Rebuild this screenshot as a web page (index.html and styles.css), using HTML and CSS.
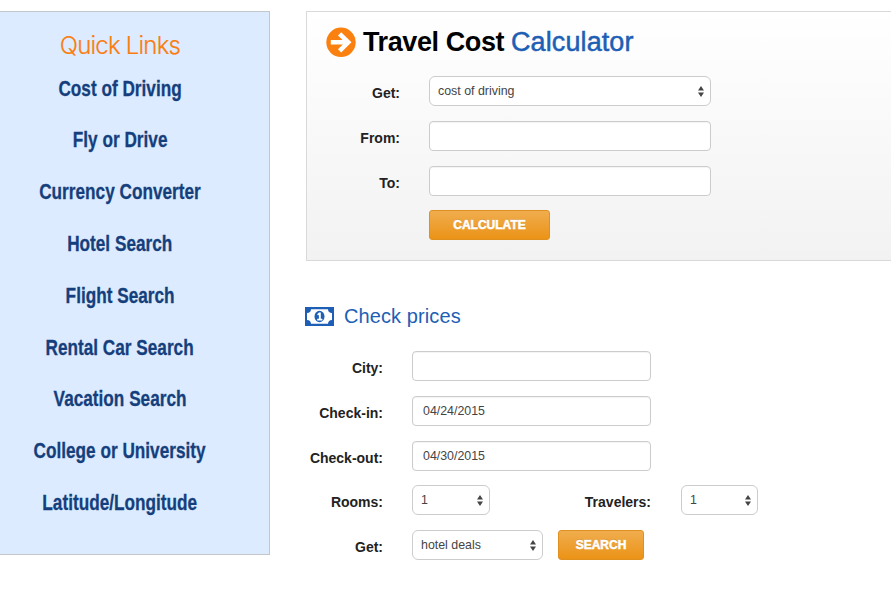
FILE: index.html
```html
<!DOCTYPE html>
<html lang="en">
<head>
<meta charset="utf-8">
<title>Travel Cost Calculator</title>
<link rel="stylesheet" href="styles.css">
</head>
<body>
<svg width="0" height="0" class="defs"><symbol id="updown" viewBox="0 0 6 11"><path d="M0 4.5 3 0 6 4.5zM0 6.5H6L3 11z" fill="#444"/></symbol></svg>
<div class="page">
  <aside class="sidebar">
    <h2>Quick Links</h2>
    <nav>
      <a><span>Cost of Driving</span></a>
      <a><span>Fly or Drive</span></a>
      <a><span>Currency Converter</span></a>
      <a><span>Hotel Search</span></a>
      <a><span>Flight Search</span></a>
      <a><span>Rental Car Search</span></a>
      <a><span>Vacation Search</span></a>
      <a><span>College or University</span></a>
      <a><span>Latitude/Longitude</span></a>
    </nav>
  </aside>
  <main>
    <section class="panel">
      <h1>
        <svg class="arrow" viewBox="0 0 30 30"><circle cx="15" cy="15.3" r="14.7" fill="#fa8110"/><path d="M4.8 15.3H22M13.6 6.8 22.2 15.3 13.6 23.8" fill="none" stroke="#fff" stroke-width="4.6"/></svg>
        <span class="black">Travel Cost</span><span class="blue">Calculator</span>
      </h1>
      <div class="form calc">
        <label>Get:</label><div class="field select">cost of driving<svg><use href="#updown"/></svg></div>
        <label>From:</label><div class="field"></div>
        <label>To:</label><div class="field"></div>
        <span></span><button class="calculate">CALCULATE</button>
      </div>
    </section>
    <section class="prices">
      <h3>
        <svg class="bill" viewBox="0 0 29 19"><path d="M0 0H29V19H0z" fill="#1d5fb5"/><path d="M6 2.2H23A4 4 0 0 0 27 6V13A4 4 0 0 0 23 16.8H6A4 4 0 0 0 2 13V6A4 4 0 0 0 6 2.2z" fill="#fff"/><ellipse cx="14.5" cy="9.5" rx="5" ry="5.8" fill="#1d5fb5"/><path d="M12.2 7.2 14 5.4H15.8V11.8H17.4V13.4H12.2V11.8H13.9V7.8L13 8.4z" fill="#fff"/></svg>
        <span>Check prices</span>
      </h3>
      <div class="form check">
        <label>City:</label><div class="field"></div>
        <label>Check-in:</label><div class="field">04/24/2015</div>
        <label>Check-out:</label><div class="field">04/30/2015</div>
        <label>Rooms:</label>
        <div class="line"><div class="field select rooms">1<svg><use href="#updown"/></svg></div><label class="trav">Travelers:</label><div class="field select travelers">1<svg><use href="#updown"/></svg></div></div>
        <label>Get:</label>
        <div class="line"><div class="field select deals">hotel deals<svg><use href="#updown"/></svg></div><button class="search">SEARCH</button></div>
      </div>
    </section>
  </main>
</div>
</body>
</html>
```
FILE: styles.css
```css
* { box-sizing: border-box; }
body { margin: 0; background: #fff; overflow: hidden; font-family: "Liberation Sans", Arial, sans-serif; }
.defs { position: absolute; }
h1, h2, h3 { margin: 0; }
.page { display: flex; align-items: flex-start; width: 891px; height: 589px; padding-top: 11px; overflow: hidden; }
.sidebar { flex: none; width: 270px; height: 544px; background: #dcebff; border: 1px solid #c3c6ca; border-left: 0; padding: 18px 29px 0 0; text-align: center; }
.sidebar h2 { font: 300 24px/32px Inter, "Liberation Sans", sans-serif; letter-spacing: -0.8px; color: #fa7d0f; -webkit-text-stroke: .2px #fa7d0f; }
.sidebar nav { padding-top: 10.6px; }
.sidebar a { display: block; height: 51.8px; line-height: 32px; font-size: 21.5px; font-weight: 700; color: #153f7c; white-space: nowrap; -webkit-text-stroke: .3px #153f7c; }
.sidebar a span { display: inline-block; transform: scaleX(.8); margin: 0 -30px; }
main { flex: none; width: 585px; margin-left: 36px; }
.panel { height: 250px; border: 1px solid #d9d9d9; border-right: 0; background: linear-gradient(#fff, #f2f2f2); padding: 15px 0 0 20px; }
.panel h1 { display: flex; align-items: center; height: 30px; line-height: 30px; font-size: 27px; white-space: nowrap; }
.arrow { width: 30px; height: 30px; margin: 0 7px 0 -1px; }
.black { width: 148px; color: #000; letter-spacing: -.4px; }
.blue { color: #1d5fb5; font-weight: 400; letter-spacing: .1px; -webkit-text-stroke: .5px #1d5fb5; }
.form { display: grid; grid-auto-rows: 30px; row-gap: 14.8px; }
.calc { grid-template-columns: 73px 282px; column-gap: 29px; margin-top: 19px; }
.check { grid-template-columns: 77px 346px; column-gap: 29px; margin-top: 22px; }
label { text-align: right; font-size: 14px; font-weight: 700; line-height: 34px; color: #222; white-space: nowrap; }
.field { position: relative; height: 30px; border: 1px solid #ccc; border-radius: 4px; background: #fff; box-shadow: inset 0 1px 1px rgba(0,0,0,.05); padding-left: 10px; font-size: 12.4px; line-height: 28px; color: #444; white-space: nowrap; }
.check > .field { width: 239px; }
.select { border-radius: 6px; padding-left: 8px; box-shadow: none; }
.select svg { position: absolute; right: 6px; top: 9px; width: 6px; height: 11px; }
.line { display: flex; }
.rooms { width: 78px; }
.trav { width: 161px; }
.travelers { width: 77px; margin-left: 30px; }
.deals { width: 131px; }
button { height: 30px; padding: 0; border: 1px solid #e0901e; border-radius: 3px; background: linear-gradient(#f0ad4e, #eb9316); color: #fff; font: 700 12px/28px "Liberation Sans", Arial, sans-serif; -webkit-text-stroke: .5px #fff; text-shadow: 0 -1px 0 rgba(0,0,0,.15); }
.calculate { width: 121px; }
.search { width: 86px; margin-left: 15px; }
.prices { padding-top: 43px; }
.prices h3 { display: flex; align-items: center; height: 25px; margin-left: -1px; font-size: 20px; letter-spacing: .1px; font-weight: 400; color: #1d5fb5; }
.bill { width: 29px; height: 19px; margin-right: 10px; }
```
